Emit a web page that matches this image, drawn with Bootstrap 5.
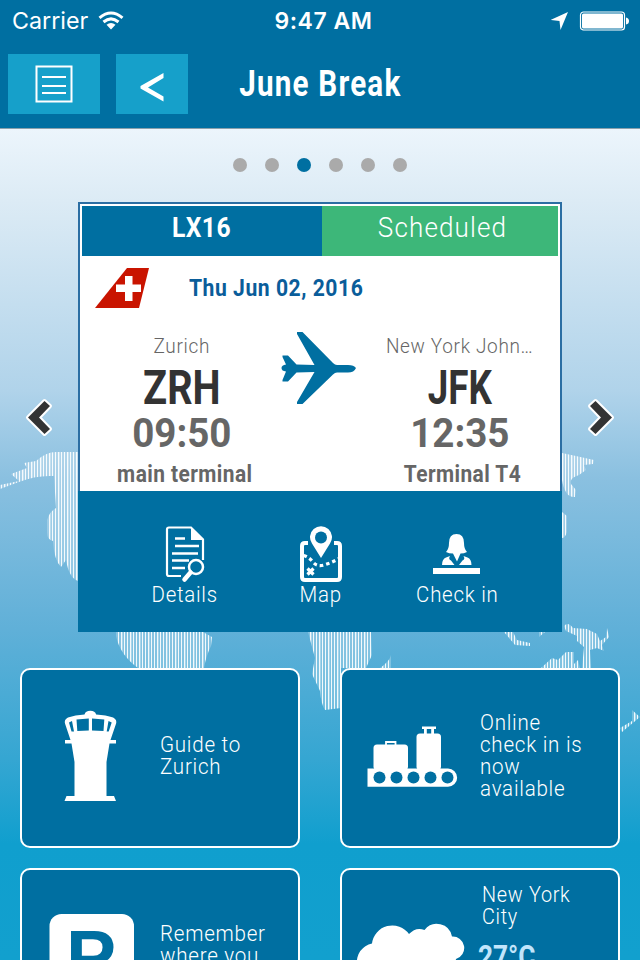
<!DOCTYPE html>
<html lang="en">
<head>
<meta charset="utf-8">
<meta name="viewport" content="width=device-width, initial-scale=1">
<title>June Break</title>
<link rel="stylesheet" href="https://cdn.jsdelivr.net/npm/bootstrap@5.3.0/dist/css/bootstrap.min.css">
<style>
  :root { --brand: #006fa1; --accent: #16a0ca; }
  body { width: 640px; height: 960px; overflow: hidden; font-family: Roboto, "Liberation Sans", sans-serif; color: #fff; background: var(--brand); }
  svg { display: block; flex: none; }
  .fit { display: inline-block; white-space: nowrap; transform: scaleX(var(--sx, 1)); }
  .fit-start { transform-origin: 0 50%; }

  .status-bar { height: 40px; padding: 0 11px 0 12px; font: 400 23.5px/42px Inter, sans-serif; display: grid; grid-template-columns: 1fr auto 1fr; }
  .carrier { --sx: .99; }
  .wifi { margin-left: 9px; }
  .clock { font-weight: 600; font-size: 23px; letter-spacing: .5px; padding-left: 6px; }
  .title-bar { height: 88px; display: grid; grid-template-columns: 1fr auto 1fr; padding: 14px 8px 14px; }
  .tool { height: 60px; background: var(--accent); border: 0; border-radius: 0; padding: 0; display: flex; align-items: center; justify-content: center; }
  .tool-menu { width: 92px; } .tool-back { width: 72px; padding-top: 5px; }
  .trip-title { font-size: 37px; line-height: 60px; font-weight: 700; letter-spacing: 1.5px; --sx: .8; }

  .stage { height: 832px; border-top: 1px solid #8aa0ac; display: grid; overflow: hidden;
    background: linear-gradient(#ecf5fc 0, #dcebf5 72px, #b0d3ea 262px, #8ac0e0 350px, #60b0d8 500px, #35a6d2 630px, #109fce 715px, #12a0ce 100%); }
  .stage > * { grid-area: 1 / 1; min-width: 0; }
  .dots { height: 73px; gap: 18px; padding-bottom: 2px; }
  .dots i { width: 14px; height: 14px; border-radius: 50%; background: #aaa; }
  .dots i.on { background: var(--brand); }

  .slider { height: 430px; }
  .arrow { width: 78px; }
  .flight { width: 484px; height: 430px; background: #fff; border: 2px solid #2b6ea3; border-radius: 0; }
  .flight-head { height: 54px; padding: 2px 2px 2px; line-height: 44px; font-size: 28px; }
  .flight-no { width: 240px; background: var(--brand); font-weight: 700; }
  .flight-no .fit { --sx: .88; letter-spacing: .5px; }
  .flight-state { background: #3db779; font-weight: 300; padding-left: 4px; }
  .flight-state .fit { --sx: .93; letter-spacing: 1.2px; }
  .date-row { height: 64px; padding: 0 0 4px 15px; }
  .date-row .fit { color: #0a5d9a; font-size: 24px; font-weight: 700; margin-left: 39px; --sx: .88; letter-spacing: .6px; line-height: 60px; }
  .legs { height: 169px; }
  .leg { width: 201px; padding-left: 3px; color: #666; }
  .leg-to { padding-left: 5px; }
  .city { font-size: 20px; font-weight: 300; line-height: 24px; margin-top: 12px; }
  .city .fit { --sx: .95; letter-spacing: .7px; }
  .code { font-size: 49px; font-weight: 700; color: #333; line-height: 56px; margin-top: 2px; }
  .code .fit { --sx: .81; }
  .leg-to .code .fit { --sx: .75; }
  .time { font-size: 41px; font-weight: 700; line-height: 40px; margin-top: -3px; }
  .time .fit { --sx: .94; }
  .term { font-size: 24px; font-weight: 700; line-height: 30px; margin: 6px 0 0 5px; }
  .term .fit { --sx: .87; letter-spacing: .5px; }
  .plane { width: 76px; }
  .actions { height: 141px; margin: 0 -2px -2px; background: var(--brand); padding: 0 0 0 39px; }
  .action { width: 136px; color: #fff; text-decoration: none; padding-top: 34px; }
  .action .fit { font-size: 22px; font-weight: 300; line-height: 24px; --sx: .93; letter-spacing: .8px; }

  .tiles { display: grid; grid-template-columns: 280px 280px; grid-auto-rows: 180px; gap: 20px 40px; padding: 36px 20px 0; }
  .tile { background: var(--brand); border: 2px solid #fff; border-radius: 10px; color: #fff; }
  .tile p { font-size: 22px; font-weight: 300; line-height: 22px; letter-spacing: .8px; --sx: .935; margin: 0 0 4px; }
  .weather { padding: 14px 0 0 2px; }
  .weather p { --sx: .9; }
  .temp { font-size: 32px; font-weight: 700; line-height: 36px; color: #c1e5fb; margin: 7px 0 0 -4px; --sx: .82; }
</style>
<script src="https://cdn.jsdelivr.net/npm/bootstrap@5.3.0/dist/js/bootstrap.bundle.min.js"></script>
</head>
<body>
<header>
  <div class="status-bar">
    <div class="d-flex align-items-center"><span class="fit fit-start carrier">Carrier</span>
      <svg class="wifi" width="26" height="20" viewBox="0 0 26 20" fill="none" stroke="#fff" stroke-width="3"><path d="M1.500 6.800Q13-2.800 24.500 6.800M5.500 11Q13 4.700 20.500 11"/><path d="M8.500 13.800Q13 10.200 17.500 13.800L13 18.500z" fill="#fff" stroke="none"/></svg>
    </div>
    <span class="fit clock">9:47 AM</span>
    <div class="d-flex align-items-center justify-content-end gap-2">
      <svg width="20" height="20" viewBox="0 0 20 20" fill="#fff"><path d="M17 1L9.500 19L8.500 10L-.500 9z"/></svg>
      <svg width="50" height="20" viewBox="0 0 50 20"><rect x="1.500" y="1" width="44" height="18" rx="3" fill="none" stroke="#fff" stroke-width="1.200"/><rect x="3" y="2.500" width="41" height="15" rx="1.500" fill="#fff"/><path d="M47 6.500q3 .5 3 3.500t-3 3.500z" fill="#fff"/></svg>
    </div>
  </div>
  <div class="title-bar">
    <div class="d-flex gap-3">
      <button class="tool tool-menu" aria-label="Menu"><svg width="38" height="38" viewBox="0 0 38 38" fill="none" stroke="#fff"><rect x="1.500" y="1.500" width="35" height="35" stroke-width="2"/><path d="M7 12h24M7 21h24M7 28h24" stroke-width="2"/></svg></button>
      <button class="tool tool-back" aria-label="Back"><svg width="24" height="30" viewBox="0 0 24 30"><path d="M23.500 1v5L8 15.500L23.500 24.500v5L.500 16.500v-2.500z" fill="#fff"/></svg></button>
    </div>
    <h1 class="fit trip-title m-0">June Break</h1>
    <div></div>
  </div>
</header>

<main class="stage">
  <svg width="640" height="831" viewBox="0 129 640 831" aria-hidden="true">
    <defs><pattern id="hatch" width="9" height="900" patternUnits="userSpaceOnUse"><g shape-rendering="crispEdges" fill="#fff"><path d="M0 0h9v900H0z" fill-opacity=".25"/><path d="M1 0h1v900H1zM4 0h1v900H4zM7 0h1v900H7z" fill-opacity=".9"/><path d="M5 0h1v900H5z" fill-opacity=".3"/></g></pattern></defs>
    <g fill="url(#hatch)">
      <path d="M0 485L19 481L11 474L27 468L24 463L36 461Q46 452 56 452H78V581Q69 578 66 560L61 567Q54 560 53 541Q47 540 47 532V520Q50 511 56 508L54 476Q36 475 19 482L0 489z"/>
      <path d="M562 453L576 456L594 460L593 464L584 465L586 470L579 475Q569 478 571 484L576 490L575 497Q565 498 562 480zM562 512l5 4v16q-2 6-5 6z"/>
      <path d="M116 632H203L212 637L211 646Q206 656 204 668H138Q120 655 116 636zM308 632H371L372 655L366 668H341V708L325 710Q321 704 320 691L312 674L315 658zM380 668Q390 661 391 655V668zM504 632H513L517 640L530 643V646L515 645zM539 632H545L539 637z"/>
      <path d="M564 626Q568 621 573 628L587 629L597 634L600 641L606 637L607 628L609 637L602 645L604 651L597 648L590 650L591 668H582L584 647L577 641L577 636L566 631zM541 668L552 658L558 660L566 652H574V664L578 660L580 668zM620 728L632 721V710L640 717L622 732z"/>
    </g>
  </svg>
  <div>
    <div class="dots d-flex align-items-center justify-content-center"><i></i><i></i><i class="on"></i><i></i><i></i><i></i></div>
    <section class="slider d-flex">
      <div class="arrow"><svg width="78" height="430" viewBox="0 202 78 430"><path d="M44.500 401l5.500 5-11 11.500 11 11.500-5.500 5-16.500-16.500z" fill="#333" stroke="#fff" stroke-width="4" stroke-linejoin="round" paint-order="stroke"/></svg></div>
      <article class="flight card flex-shrink-0">
        <div class="flight-head d-flex text-center">
          <div class="flight-no"><span class="fit">LX16</span></div>
          <div class="flight-state flex-fill"><span class="fit">Scheduled</span></div>
        </div>
        <div class="date-row d-flex align-items-center">
          <svg width="55" height="42" viewBox="95 267 55 42"><path d="M127 268h22l-10 40H95z" fill="#c91400"/><path d="M125 276h7.500v8.500h8.500v7.500h-8.500v9H125v-9h-9v-7.500h9z" fill="#fff"/></svg>
          <span class="fit fit-start">Thu Jun 02, 2016</span>
        </div>
        <div class="legs d-flex text-center">
          <div class="leg"><div class="city"><span class="fit">Zurich</span></div><div class="code"><span class="fit">ZRH</span></div><div class="time"><span class="fit">09:50</span></div><div class="term"><span class="fit">main terminal</span></div></div>
          <div class="plane"><svg width="76" height="90" viewBox="281 322 76 90"><path d="M281.500 368q0-3 4.500-3.500L282.500 357v-1.500h5.500l8.500 9 18 .500L297 334v-2h5.500l30.500 31q2 2 4 2h11q6 0 8 3-2 4.500-8 4.500h-11q-2 0-4 2l-30.500 29.500h-5.500v-2l17.500-30-18 .500-8.500 9h-5.500V380l3.500-8.500q-4.500-.5-4.500-3.500z" fill="#006fa1"/></svg></div>
          <div class="leg leg-to"><div class="city"><span class="fit">New York John…</span></div><div class="code"><span class="fit">JFK</span></div><div class="time"><span class="fit">12:35</span></div><div class="term"><span class="fit">Terminal T4</span></div></div>
        </div>
        <nav class="actions d-flex">
          <a class="action d-flex flex-column align-items-center" href="#"><svg width="42" height="58" viewBox="164 525 42 58" fill="none" stroke="#fff"><path d="M181 576h-12q-2 0-2-2v-44.500q0-2 2-2h22l12 12V560" stroke-width="2.200"/><path d="M191 527l12.500 13H191z" fill="#fff" stroke="none"/><path d="M175 538.500h10M175 546h24M172 553.500h26M172 560.500h17M172 568h13" stroke-width="2.700"/><circle cx="196" cy="567" r="7" stroke-width="2.500"/><path d="M190.500 572.500L184.500 579.500" stroke-width="4.500" stroke-linecap="round"/></svg><span class="fit">Details</span></a>
          <a class="action d-flex flex-column align-items-center" href="#"><svg width="42" height="58" viewBox="300 525 42 58" fill="none" stroke="#fff"><path d="M308 543h-3q-3 0-3 3v31q0 3 3 3h32q3 0 3-3v-31q0-3-3-3h-3" stroke-width="4"/><path d="M321 558l-9-14.500a11 11 0 1 1 18 0z" fill="#fff" stroke="none"/><circle cx="321" cy="537.500" r="6" fill="#006fa1" stroke="none"/><path d="M303.500 555.500Q309 557 313 562T324 565T339 558.500" stroke-width="3.200" stroke-dasharray="3.500 3"/><path d="M307.500 568.500l6 6m0-6l-6 6" stroke-width="3.200"/></svg><span class="fit">Map</span></a>
          <a class="action d-flex flex-column align-items-center" href="#"><svg width="48" height="58" viewBox="433 525 48 58" fill="#fff"><path d="M433 568h47v6h-47z"/><path d="M446 552q3-3 3-9 0-9 7.500-9t7.500 9q0 6 3 9-3 1.500-6.500 1.500L457 561.500l-4-8q-4 0-7-1.500z"/><path d="M442 565q0-6 4-7.500l4-1.500q-2 3 1 4.500l3.500 4.500zM471.500 565q0-6-4-7.500l-4-1.500q2 3-1 4.500l-3.500 4.500z"/></svg><span class="fit">Check in</span></a>
        </nav>
      </article>
      <div class="arrow"><svg width="78" height="430" viewBox="562 202 78 430"><path d="M595.500 401l-5.500 5 11 11.500-11 11.500 5.500 5 16.500-16.500z" fill="#333" stroke="#fff" stroke-width="4" stroke-linejoin="round" paint-order="stroke"/></svg></div>
    </section>
    <section class="tiles">
      <div class="tile d-flex align-items-center">
        <svg width="138" height="176" viewBox="22 670 138 176"><path d="M70.500 740L65 723.500q-1-4 3-6 7-2.300 16.500-3 1-3.700 5.800-3.700t5.800 3.700q10 .7 17 3 4 2 3 6L110.500 740h5.500v3.500h-6.500L106.500 762v34h7.500l2 5H64.500l2-5h8v-34l-3-18.500H65V740z" fill="#fff"/><path d="M69 722.500l3-1.500 2 10.500h-2.500zM76.500 719.500l12.300-1v12l-11.500.500zM92 718.500l12.300 1-.8 11.500-11.500-.5zM108.500 721l3.200 1.500-3 9h-2z" fill="#006fa1"/></svg>
        <p class="fit fit-start">Guide to<br>Zurich</p>
      </div>
      <div class="tile d-flex align-items-center">
        <svg width="138" height="176" viewBox="342 670 138 176"><g fill="#fff"><path d="M367.500 768.500H448a9 9 0 0 1 0 18.300h-80.500z"/><rect x="373.500" y="744.500" width="34.500" height="25.500" rx="3.500"/><rect x="416.500" y="733.500" width="24.500" height="36.500" rx="3.500"/><path d="M422 726.500h14v2.500h-2v5h-2.800v-5h-4.400v5H424v-5h-2z"/></g><path d="M386 745v-3h9.500v3" fill="none" stroke="#fff" stroke-width="1.800"/><g fill="#006fa1"><circle cx="379.500" cy="777.500" r="6"/><circle cx="396.500" cy="777.500" r="6"/><circle cx="413.500" cy="777.500" r="6"/><circle cx="430.500" cy="777.500" r="6"/><circle cx="447.500" cy="777.500" r="6"/></g></svg>
        <p class="fit fit-start">Online<br>check in is<br>now<br>available</p>
      </div>
      <div class="tile d-flex align-items-center">
        <svg width="138" height="176" viewBox="22 870 138 176"><rect x="49.500" y="914" width="84.500" height="84" rx="12" fill="#fff"/><text x="66" y="982" font-family="Liberation Sans, sans-serif" font-size="75" font-weight="700" fill="#006fa1">P</text></svg>
        <p class="fit fit-start">Remember<br>where you<br>parked</p>
      </div>
      <div class="tile d-flex">
        <svg width="138" height="176" viewBox="342 870 138 176"><path d="M378 980a18.500 18.500 0 0 1-6-36.500 20.500 20.500 0 0 1 37-9.500q7-7.500 15.500-4a15.500 15.500 0 0 1 27.500 6.500 11.500 11.500 0 0 1 4 22.500q-4 21-20 21z" fill="#fff"/></svg>
        <div class="weather"><p class="fit fit-start m-0">New York<br>City</p><div class="temp"><span class="fit fit-start">27°C</span></div></div>
      </div>
    </section>
  </div>
</main>
</body>
</html>
